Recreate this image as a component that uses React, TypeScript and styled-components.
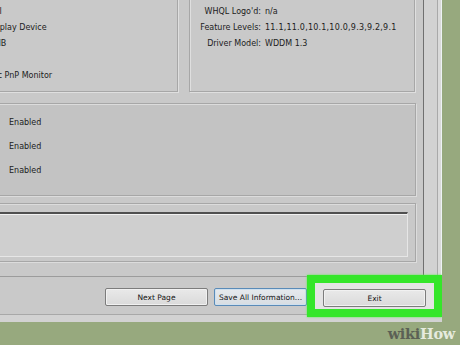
import { Fragment } from "react";
import styled, { createGlobalStyle } from "styled-components";

const GlobalStyle = createGlobalStyle`
  html, body {
    margin: 0;
    padding: 0;
  }
  body {
    background: #97a97e;
    font-family: "DejaVu Sans", Verdana, sans-serif;
    font-size: 8px;
    color: #1c1c1c;
  }
`;

const Screen = styled.div`
  position: relative;
  width: 460px;
  height: 345px;
  overflow: hidden;
`;

const Window = styled.div`
  width: 442px;
  height: 322px;
  background: #c9c9c9;
  display: flex;
  flex-direction: column;
  overflow: hidden;
`;

const Upper = styled.div`
  display: flex;
  height: 277px;
  flex-shrink: 0;
`;

const TabPage = styled.div`
  box-sizing: border-box;
  width: 424px;
  height: 277px;
  border-right: 1px solid #707070;
  border-bottom: 1px solid #9c9c9c;
  overflow: hidden;
`;

const Edge = styled.div`
  flex: 1;
  background: linear-gradient(
    to right,
    #d2d2d2 0 13px,
    #a9a9a9 13px 14px,
    #dadada 14px 17px,
    #eef2f4 17px
  );
`;

const TopRow = styled.div`
  display: flex;
  gap: 11px;
  margin: -20px 0 0 -152px;
`;

const Panel = styled.div<{ $width: number; $label: number }>`
  box-sizing: border-box;
  width: ${(p) => p.$width}px;
  height: 112px;
  flex-shrink: 0;
  padding: 7px 5px;
  border: 1px solid #a7a7a7;
  box-shadow: inset 1px 1px 0 #dfdfdf, 1px 1px 0 #dfdfdf;
  display: grid;
  grid-template-columns: ${(p) => p.$label}px 1fr;
  grid-auto-rows: 16px;
  column-gap: 4px;
  align-content: start;
`;

const Label = styled.div`
  text-align: right;
  line-height: 16px;
  white-space: nowrap;
`;

const Value = styled.div<{ $spread?: boolean }>`
  line-height: 16px;
  white-space: nowrap;
  letter-spacing: ${(p) => (p.$spread ? "0.22px" : "0")};
`;

const FeatureBox = styled.div`
  box-sizing: border-box;
  width: 579px;
  height: 93px;
  margin: 11px 0 0 -163px;
  padding: 11px 5px 0;
  background: #c3c3c3;
  border: 1px solid #a7a7a7;
  box-shadow: inset 1px 1px 0 #dcdcdc, 1px 1px 0 #dcdcdc;
  display: grid;
  grid-template-columns: 136px 1fr;
  grid-auto-rows: 16px;
  row-gap: 8px;
  column-gap: 30px;
  align-content: start;
`;

const NotesFrame = styled.div`
  box-sizing: border-box;
  width: 426px;
  height: 59px;
  margin: 7px 0 0 -10px;
  padding: 8px 7px 4px 0;
  border: 1px solid #a7a7a7;
  box-shadow: inset 1px 1px 0 #dcdcdc, 1px 1px 0 #dcdcdc;
`;

const NotesArea = styled.div`
  box-sizing: border-box;
  height: 100%;
  background: #cfcfcf;
  border-top: 2px solid #505050;
  border-right: 1px solid #e6e6e6;
  border-bottom: 1px solid #e6e6e6;
  box-shadow: inset 0 1px 0 #f2f2f2;
`;

const Footer = styled.div`
  box-sizing: border-box;
  height: 45px;
  display: flex;
  align-items: flex-start;
  gap: 6px;
  padding: 11px 0 0 105px;
  box-shadow: inset 0 -7px 0 #d2d2d2, inset 0 -8px 0 #a8a8a8;
`;

const Button = styled.button<{ $width: number; $focused?: boolean }>`
  box-sizing: border-box;
  width: ${(p) => p.$width}px;
  height: 18px;
  padding: 0;
  font-family: "DejaVu Sans", Verdana, sans-serif;
  font-size: 7.5px;
  color: #151515;
  white-space: nowrap;
  border: 1px solid ${(p) => (p.$focused ? "#5a8bb8" : "#7c7c7c")};
  border-radius: 2px;
  background: ${(p) =>
    p.$focused
      ? "linear-gradient(#e6eaee, #d7dde2)"
      : "linear-gradient(#e9e9e9, #dadada)"};
  box-shadow: inset 0 0 0 1px ${(p) => (p.$focused ? "#cfe0ee" : "#f1f1f1")};
`;

const Highlight = styled.div`
  box-sizing: border-box;
  width: 135px;
  height: 42px;
  flex-shrink: 0;
  margin: -13px 0 0 -6px;
  padding: 6px 8px 0;
  border: 8px solid #35e62a;
  background: #e4e4e4;
  box-shadow: 0 0 2px #5bf050;
`;

const Watermark = styled.div`
  position: absolute;
  right: 5px;
  bottom: 4px;
  font-family: "DejaVu Serif", "Liberation Serif", serif;
  font-weight: bold;
  font-size: 14.5px;
  line-height: 15px;
  letter-spacing: -0.3px;
`;

const Wiki = styled.span`
  color: rgba(72, 72, 72, 0.75);
`;

const How = styled.span`
  color: rgba(245, 248, 240, 0.85);
`;

const displayRows = [
  ["Chip Type:", "Intel(R) HD Graphics Family"],
  ["DAC Type:", "Internal"],
  ["Device Type:", "Full Display Device"],
  ["Approx. Total Memory:", "1792 MB"],
  ["Current Display Mode:", "n/a"],
  ["Monitor:", "Generic PnP Monitor"],
];

const driverRows = [
  ["Date:", "9/23/2014 8:00:00 PM"],
  ["WHQL Logo'd:", "n/a"],
  ["Feature Levels:", "11.1,11.0,10.1,10.0,9.3,9.2,9.1"],
  ["Driver Model:", "WDDM 1.3"],
  ["", ""],
  ["", ""],
];

const features = [
  "DirectDraw Acceleration:",
  "Direct3D Acceleration:",
  "AGP Texture Acceleration:",
];

export default function App() {
  return (
    <Screen>
      <GlobalStyle />
      <Window>
        <Upper>
          <TabPage>
            <TopRow>
              <Panel $width={330} $label={113}>
                {displayRows.map(([label, value], i) => (
                  <Fragment key={i}>
                    <Label>{label}</Label>
                    <Value>{value}</Value>
                  </Fragment>
                ))}
              </Panel>
              <Panel $width={226} $label={66}>
                {driverRows.map(([label, value], i) => (
                  <Fragment key={i}>
                    <Label>{label}</Label>
                    <Value $spread={label === "Feature Levels:"}>{value}</Value>
                  </Fragment>
                ))}
              </Panel>
            </TopRow>
            <FeatureBox>
              {features.map((label) => (
                <Fragment key={label}>
                  <Label>{label}</Label>
                  <Value>Enabled</Value>
                </Fragment>
              ))}
            </FeatureBox>
            <NotesFrame>
              <NotesArea />
            </NotesFrame>
          </TabPage>
          <Edge />
        </Upper>
        <Footer>
          <Button $width={103}>Next Page</Button>
          <Button $width={93} $focused>
            Save All Information...
          </Button>
          <Highlight>
            <Button $width={103}>Exit</Button>
          </Highlight>
        </Footer>
      </Window>
      <Watermark>
        <Wiki>wiki</Wiki>
        <How>How</How>
      </Watermark>
    </Screen>
  );
}
